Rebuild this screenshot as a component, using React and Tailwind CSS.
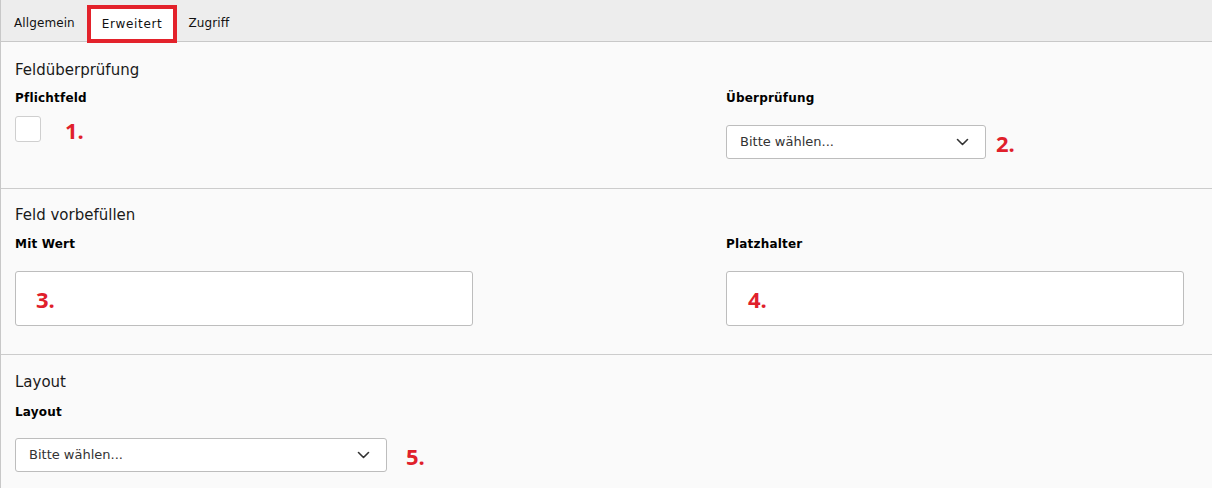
import React from 'react';

const RED = 'text-[#e0202b]';

function Marker({ n, className = '' }) {
  return (
    <span
      className={`${RED} text-[22px] font-bold leading-none ${className}`}
      style={{ fontFamily: '"Open Sans", "Liberation Sans", sans-serif' }}
    >
      {n}.
    </span>
  );
}

function Chevron() {
  return (
    <svg width="13" height="8" viewBox="0 0 13 8" fill="none" stroke="#333" strokeWidth="1.6" strokeLinecap="round" strokeLinejoin="round">
      <path d="M1.5 1.5l5 5 5-5" />
    </svg>
  );
}

function Select({ width }) {
  return (
    <div className={`${width} h-[34px] flex items-center justify-between bg-white border border-[#bdbdbd] rounded-[3px] pl-[13px] pr-[16px] text-[13px] text-[#333]`}>
      <span>Bitte wählen...</span>
      <Chevron />
    </div>
  );
}

function Label({ children }) {
  return <div className="text-[12px] font-bold leading-[16px] tracking-[0.2px] text-black">{children}</div>;
}

function Heading({ children, className = '' }) {
  return <div className={`text-[15px] leading-[20px] text-[#1a1a1a] ${className}`}>{children}</div>;
}

export default function App() {
  const tabs = ['Allgemein', 'Erweitert', 'Zugriff'];
  return (
    <div
      className="w-[1212px] h-[488px] overflow-hidden bg-[#fafafa] border-l border-[#c8c8c8]"
      style={{ fontFamily: '"DejaVu Sans", Verdana, sans-serif' }}
    >
      {/* Tabs */}
      <div className="h-[42px] flex items-stretch pt-[5px] bg-[#ededed] border-b border-[#c8c8c8]">
        {tabs.map((t) =>
          t === 'Erweitert' ? (
            <div
              key={t}
              className="relative z-10 -mb-[2px] ml-[1px] flex items-center px-[11px] bg-white border-4 border-[#e3222b] text-[12px] tracking-[0.65px] text-[#111]"
            >
              {t}
            </div>
          ) : (
            <div
              key={t}
              className={`flex items-center px-[11px] text-[12px] tracking-[0.1px] text-[#111] ${t === 'Allgemein' ? 'ml-[2px]' : ''}`}
            >
              {t}
            </div>
          )
        )}
      </div>

      {/* Feldüberprüfung */}
      <div className="px-[14px] pt-[18px] pb-[29px] border-b border-[#cccccc]">
        <Heading>Feldüberprüfung</Heading>
        <div className="grid grid-cols-[711px_1fr] mt-[10px]">
          <div>
            <Label>Pflichtfeld</Label>
            <div className="flex items-center mt-[10px]">
              <div className="w-[26px] h-[26px] bg-white border border-[#cfcfcf] rounded-[3px]" />
              <Marker n="1" className="ml-[24px] mt-[1px]" />
            </div>
          </div>
          <div>
            <Label>Überprüfung</Label>
            <div className="flex items-center mt-[19px]">
              <Select width="w-[260px]" />
              <Marker n="2" className="ml-[10px] mt-[1px]" />
            </div>
          </div>
        </div>
      </div>

      {/* Feld vorbefüllen */}
      <div className="px-[14px] pt-[16px] pb-[28px] border-b border-[#cccccc]">
        <Heading>Feld vorbefüllen</Heading>
        <div className="grid grid-cols-[711px_1fr] mt-[11px]">
          <div>
            <Label>Mit Wert</Label>
            <div className="mt-[19px] w-[458px] h-[55px] flex items-center pl-[20px] bg-white border border-[#bdbdbd] rounded-[3px]">
              <Marker n="3" />
            </div>
          </div>
          <div>
            <Label>Platzhalter</Label>
            <div className="mt-[19px] w-[458px] h-[55px] flex items-center pl-[21px] bg-white border border-[#bdbdbd] rounded-[3px]">
              <Marker n="4" />
            </div>
          </div>
        </div>
      </div>

      {/* Layout */}
      <div className="px-[14px] pt-[17px]">
        <Heading>Layout</Heading>
        <div className="mt-[12px]">
          <Label>Layout</Label>
          <div className="flex items-center mt-[18px]">
            <Select width="w-[372px]" />
            <Marker n="5" className="ml-[19px] mt-[2px]" />
          </div>
        </div>
      </div>
    </div>
  );
}
